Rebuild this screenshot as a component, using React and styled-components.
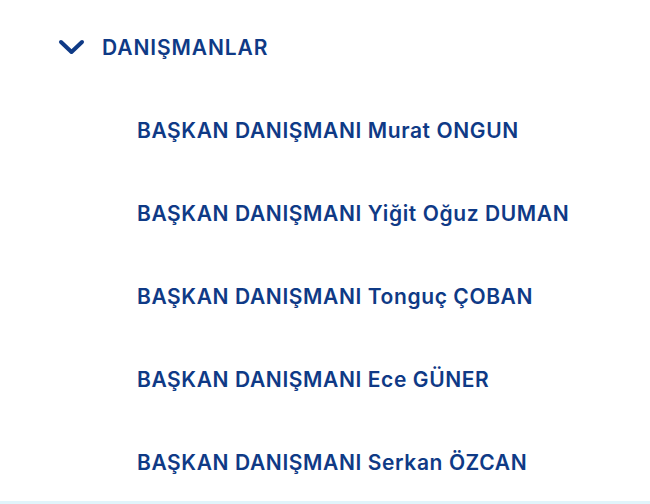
import styled, { createGlobalStyle } from "styled-components"

const Global = createGlobalStyle`
body {
  margin: 0;
  background: #fff;
  font-family: "Inter", "Liberation Sans", sans-serif;
}
`

const navy = "#0f3a86"

// menü bölümü : başlık + alt linkler
const Section = styled.section`
width: 650px;
height: 504px;
box-sizing: border-box;
padding-top: 33px;
border-bottom: 3px solid #e1f4fb;
`
const Toggle = styled.div`
display: flex;
align-items: center;
gap: 17px;
padding-left: 58px;
height: 28px;
`
const Title = styled.h2`
margin: 0;
color: ${navy};
font-size: 21px;
font-weight: 600;
letter-spacing: 0.9px;
`
const List = styled.ul`
list-style: none;
margin: 0;
padding: 0 0 0 137px;
`
const Item = styled.li`
margin-top: 55px;
height: 28px;
display: flex;
align-items: center;
color: ${navy};
font-size: 21px;
font-weight: 600;
letter-spacing: 0.6px;
`

const Chevron = () => (
  <svg width="27" height="16" viewBox="0 0 27 16">
    <path d="M3 3 L13.5 13 L24 3" fill="none" stroke={navy} strokeWidth="4" strokeLinecap="round" strokeLinejoin="round" />
  </svg>
)

const names = ["Murat ONGUN", "Yiğit Oğuz DUMAN", "Tonguç ÇOBAN", "Ece GÜNER", "Serkan ÖZCAN"]

const App = () => {
  return (
    <>
      <Global />
      <Section>
        <Toggle>
          <Chevron />
          <Title>DANIŞMANLAR</Title>
        </Toggle>
        <List>
          {names.map((n) => (
            <Item key={n}>BAŞKAN DANIŞMANI {n}</Item>
          ))}
        </List>
      </Section>
    </>
  )
}

export default App
